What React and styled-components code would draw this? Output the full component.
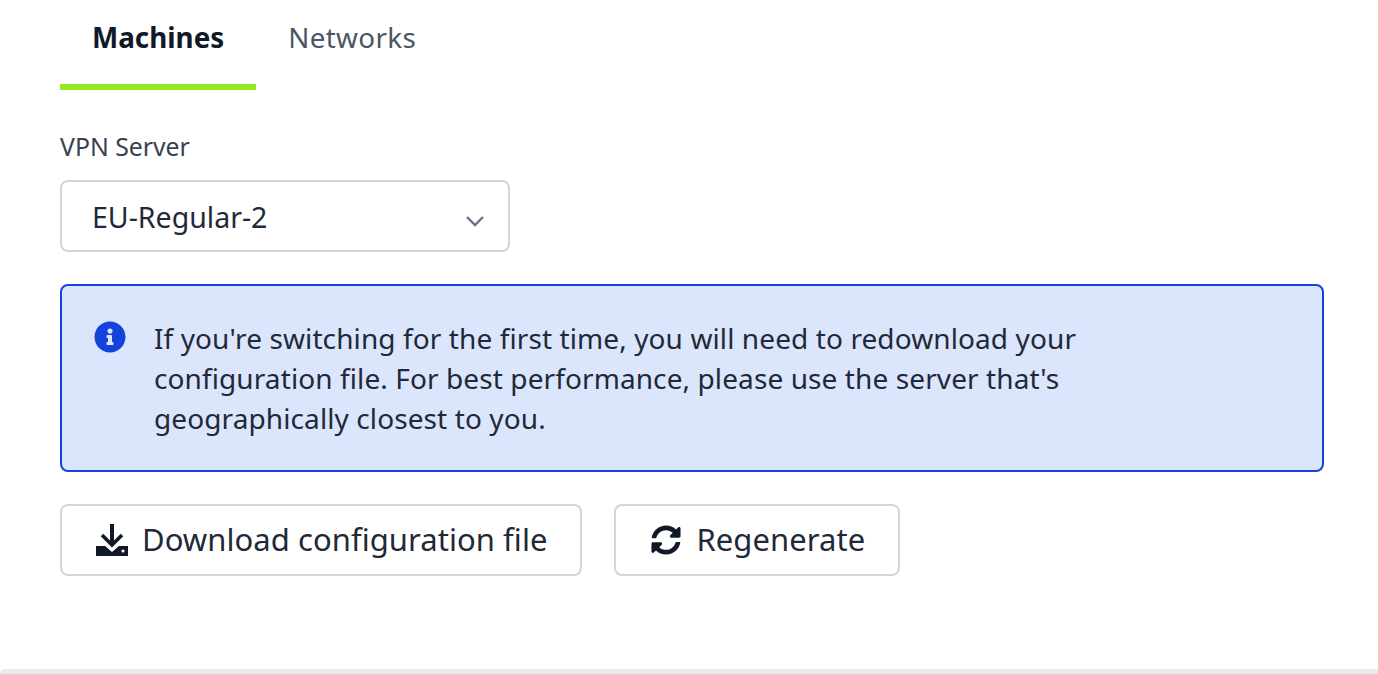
import React from 'react'
import styled, { createGlobalStyle } from 'styled-components'
import { FaInfoCircle, FaSyncAlt } from 'react-icons/fa'

const GlobalStyle = createGlobalStyle`
  html, body {
    margin: 0;
    padding: 0;
    background: #fff;
    overflow: hidden;
  }
  * {
    box-sizing: border-box;
  }
`

const Page = styled.div`
  height: 674px;
  display: flex;
  flex-direction: column;
  font-family: 'Noto Sans', 'Liberation Sans', sans-serif;
  color: #1f2937;
`

const Content = styled.div`
  flex: 1;
  padding: 0 54px 0 60px;
`

const Tabs = styled.div`
  display: flex;
  height: 90px;
`

const Tab = styled.div`
  padding: 18px 32px 0;
  font-size: 27.8px;
  line-height: 38px;
  font-weight: ${(p) => (p.$active ? 700 : 400)};
  letter-spacing: ${(p) => (p.$active ? 0 : '0.35px')};
  color: ${(p) => (p.$active ? '#111827' : '#4b5563')};
  border-bottom: 6px solid ${(p) => (p.$active ? '#95e81c' : 'transparent')};
`

const Label = styled.div`
  margin-top: 39px;
  font-size: 24.8px;
  line-height: 34px;
  color: #374151;
`

const Select = styled.div`
  margin-top: 17px;
  width: 450px;
  height: 72px;
  padding: 1px 23px 0 30px;
  display: flex;
  align-items: center;
  justify-content: space-between;
  border: 2px solid #d0d4de;
  border-radius: 8px;
  font-size: 28.5px;
  color: #1f2937;
`

const Chevron = styled.svg`
  width: 20px;
  height: 12px;
  margin-top: 9px;
  color: #6b7280;
`

const Alert = styled.div`
  margin-top: 32px;
  height: 188px;
  padding: 32px 32px;
  display: flex;
  gap: 28px;
  background: #dbe5fc;
  border: 2px solid #1443e0;
  border-radius: 8px;
  font-size: 28px;
  line-height: 40px;
  letter-spacing: 0.1px;
`

const AlertIcon = styled(FaInfoCircle)`
  flex: none;
  width: 32px;
  height: 32px;
  margin-top: 3px;
  color: #1443dc;
`

const AlertText = styled.div`
  width: 960px;
`

const Actions = styled.div`
  margin-top: 32px;
  display: flex;
  gap: 32px;
`

const Button = styled.div`
  height: 72px;
  padding: 0 33px 0 34px;
  display: flex;
  align-items: center;
  gap: 14px;
  border: 2px solid #d0d4de;
  border-radius: 8px;
  font-size: 31px;
  letter-spacing: 0.05px;
  color: #1f2937;
`

const ButtonLabel = styled.span`
  margin-top: -2px;
`

const ButtonIcon = styled.svg`
  flex: none;
  width: 32px;
  height: 32px;
  color: #111827;
`

const SyncIcon = styled(FaSyncAlt)`
  flex: none;
  width: 30px;
  height: 30px;
  margin: 0 1px;
  color: #111827;
`

const BottomBar = styled.div`
  height: 5px;
  background: #e9e9ef;
  border-top-left-radius: 5px;
`

const DownloadIcon = () => (
  <ButtonIcon viewBox="0 0 32 32">
    <path d="M14 0h4v20h-4z" fill="currentColor" />
    <path d="M6 11l10 10 10-10" fill="none" stroke="currentColor" strokeWidth="3.6" />
    <path d="M0 22h9l7 6 7-6h9v10H0z" fill="currentColor" />
    <circle cx="27" cy="27" r="1.6" fill="#fff" />
  </ButtonIcon>
)

const App = () => (
  <Page>
    <GlobalStyle />
    <Content>
      <Tabs>
        <Tab $active>Machines</Tab>
        <Tab>Networks</Tab>
      </Tabs>
      <Label>VPN Server</Label>
      <Select>
        EU-Regular-2
        <Chevron viewBox="0 0 20 12" fill="none" stroke="currentColor" strokeWidth="2.4">
          <path d="M2 2l8 8 8-8" />
        </Chevron>
      </Select>
      <Alert>
        <AlertIcon />
        <AlertText>
          If you're switching for the first time, you will need to redownload your configuration
          file. For best performance, please use the server that's geographically closest to you.
        </AlertText>
      </Alert>
      <Actions>
        <Button>
          <DownloadIcon />
          <ButtonLabel>Download configuration file</ButtonLabel>
        </Button>
        <Button>
          <SyncIcon />
          <ButtonLabel>Regenerate</ButtonLabel>
        </Button>
      </Actions>
    </Content>
    <BottomBar />
  </Page>
)

export default App
